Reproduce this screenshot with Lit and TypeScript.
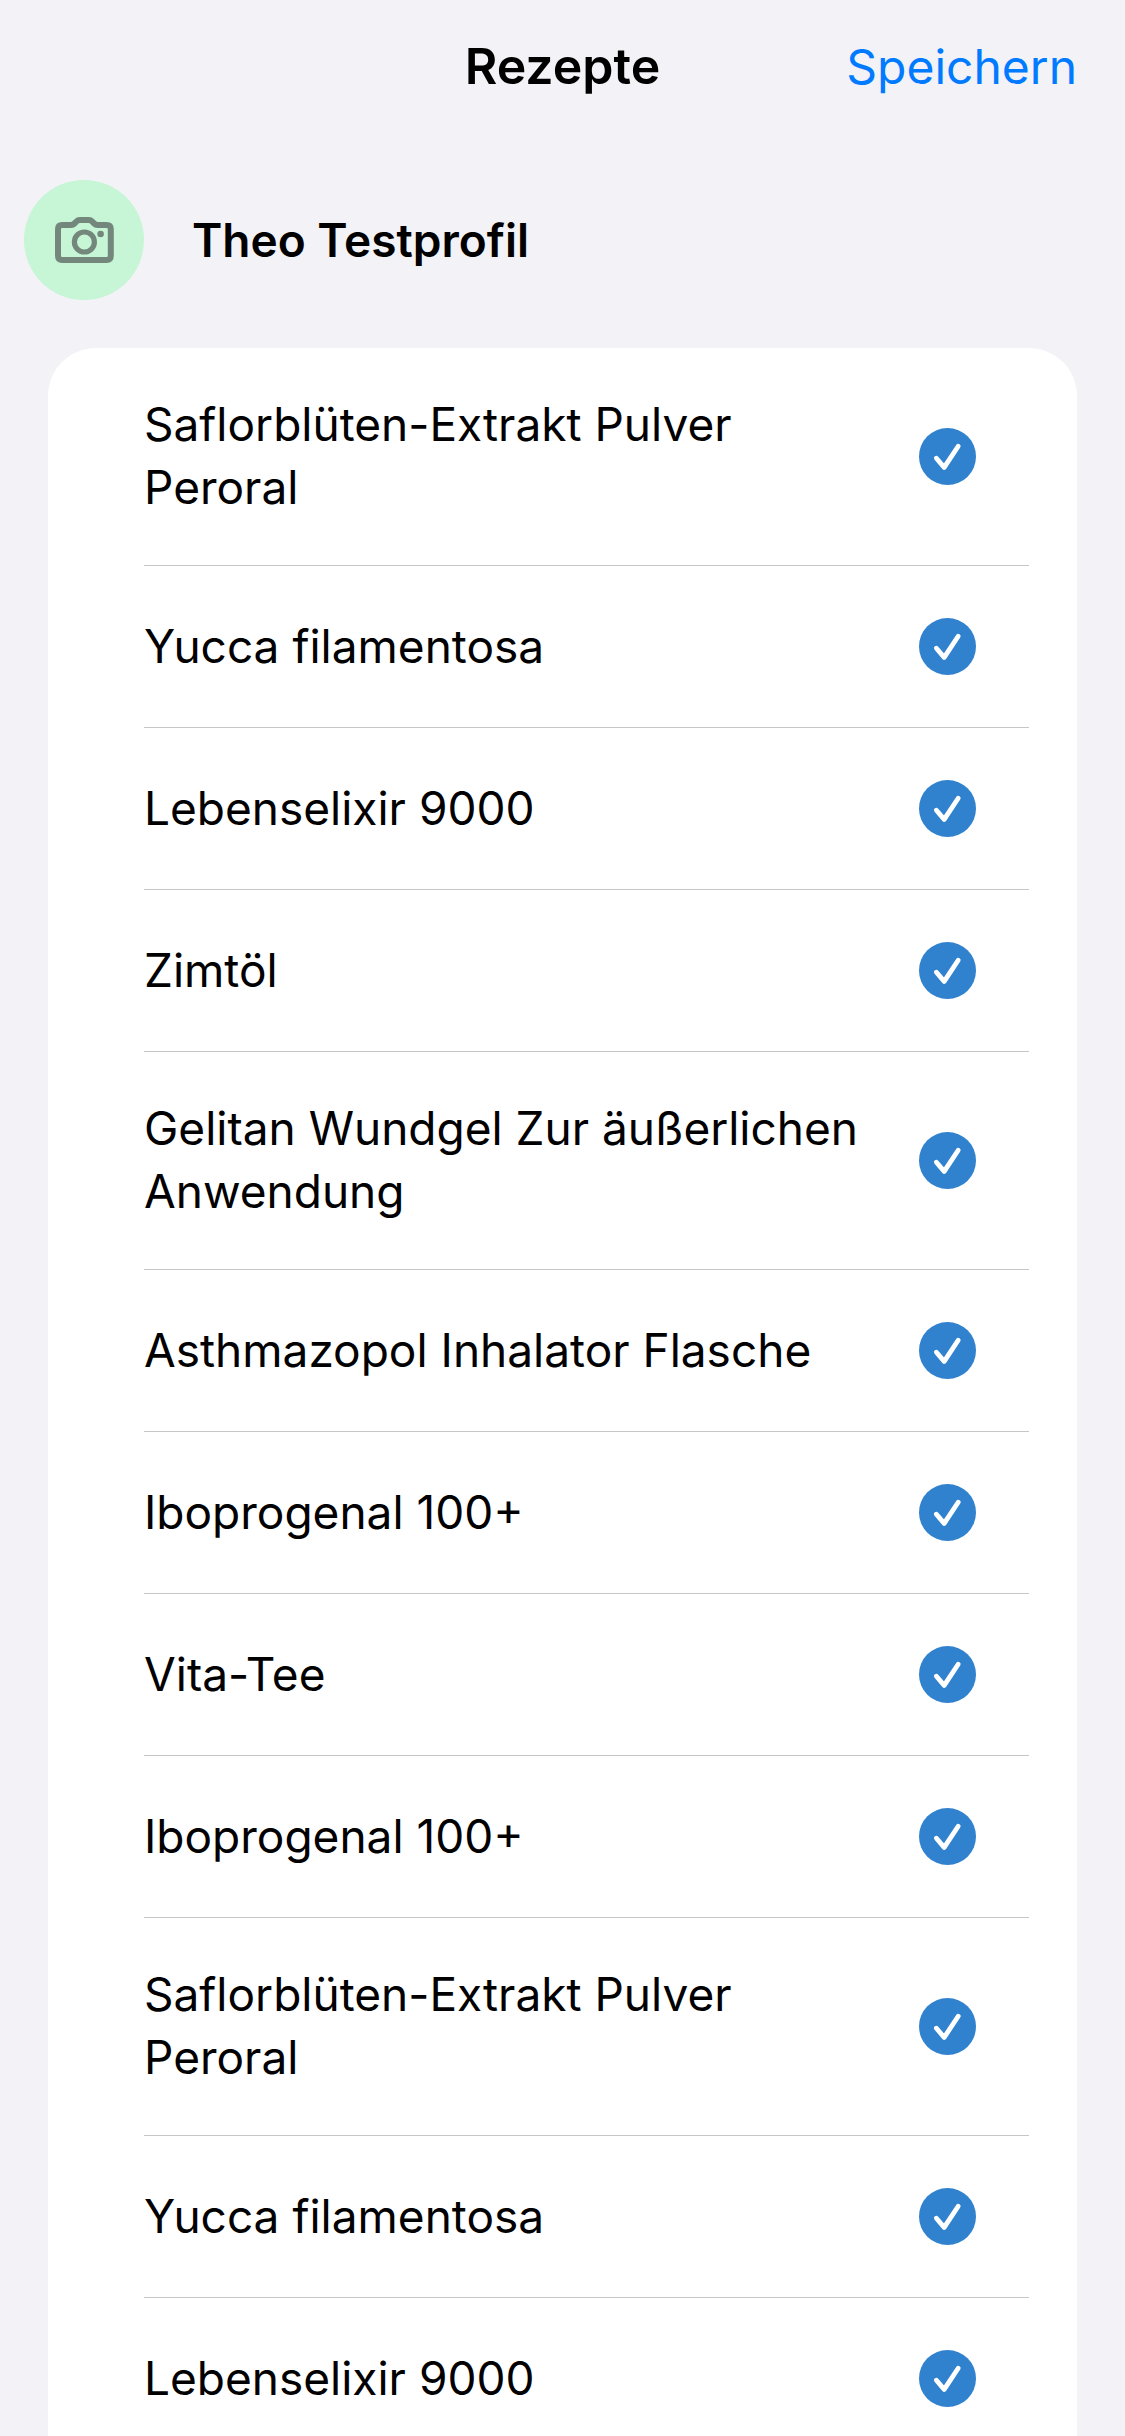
import { LitElement, html, css } from "lit";
import { customElement, property, state } from "lit/decorators.js";

interface Prescription {
  name: string;
  selected: boolean;
}

const NAMES = [
  "Saflorblüten-Extrakt Pulver Peroral",
  "Yucca filamentosa",
  "Lebenselixir 9000",
  "Zimtöl",
  "Gelitan Wundgel Zur äußerlichen Anwendung",
  "Asthmazopol Inhalator Flasche",
  "Iboprogenal 100+",
  "Vita-Tee",
  "Iboprogenal 100+",
  "Saflorblüten-Extrakt Pulver Peroral",
  "Yucca filamentosa",
  "Lebenselixir 9000",
];

@customElement("prescription-row")
export class PrescriptionRow extends LitElement {
  @property() name = "";
  @property({ type: Boolean }) selected = false;

  static styles = css`
    :host {
      display: block;
    }
    .row {
      display: flex;
      align-items: center;
      gap: 48px;
      min-height: 161px;
      padding: 45px 53px 46px 0;
      box-sizing: border-box;
      cursor: pointer;
    }
    .name {
      flex: 1;
      min-width: 0;
      font-size: 46px;
      line-height: 63px;
    }
    .check {
      display: grid;
      flex: none;
      width: 57px;
      height: 57px;
    }
    .box,
    .tick {
      grid-area: 1 / 1;
      width: 100%;
      height: 100%;
    }
    .box {
      appearance: none;
      margin: 0;
      box-sizing: border-box;
      border: 3px solid #c6c6c8;
      border-radius: 50%;
      cursor: pointer;
    }
    .box:checked {
      border: 0;
      background: #3182ce;
    }
    .tick {
      pointer-events: none;
      visibility: hidden;
    }
    .box:checked + .tick {
      visibility: visible;
    }
  `;

  render() {
    return html`
      <label class="row">
        <span class="name">${this.name}</span>
        <span class="check">
          <input class="box" type="checkbox" .checked=${this.selected} />
          <svg class="tick" viewBox="0 0 57 57" aria-hidden="true">
            <path d="M17.4 30.2 25.2 39.4 39.2 18.2" fill="none" stroke="#fff"
              stroke-width="4.8" stroke-linecap="round" stroke-linejoin="round" />
          </svg>
        </span>
      </label>
    `;
  }
}

@customElement("app-root")
export class AppRoot extends LitElement {
  @state() private items: Prescription[] = NAMES.map((name) => ({ name, selected: true }));

  static styles = css`
    :host {
      display: flex;
      flex-direction: column;
      height: 100vh;
      background: #f2f2f7;
      color: #000;
      font-family: Inter, "Liberation Sans", sans-serif;
    }
    .header {
      display: grid;
      grid-template-columns: 1fr auto 1fr;
      align-items: center;
      flex: none;
      height: 132px;
      padding: 0 48px;
    }
    .title {
      grid-column: 2;
      margin: 0;
      font-size: 50px;
      line-height: 63px;
      font-weight: 600;
    }
    .save {
      grid-column: 3;
      justify-self: end;
      padding: 0;
      border: 0;
      background: none;
      color: #007aff;
      font: inherit;
      font-size: 48px;
      line-height: 63px;
      cursor: pointer;
    }
    .content {
      flex: 1;
      min-height: 0;
      overflow-y: auto;
      scrollbar-width: none;
    }
    .profile {
      display: flex;
      align-items: center;
      gap: 48px;
      padding: 48px 24px;
    }
    .avatar {
      display: flex;
      align-items: center;
      justify-content: center;
      width: 120px;
      height: 120px;
      padding: 0;
      border: 0;
      border-radius: 50%;
      background: #c6f6d5;
      color: #74877c;
      cursor: pointer;
    }
    .camera {
      width: 59px;
      height: 46px;
    }
    .person {
      margin: 0;
      font-size: 46px;
      line-height: 63px;
      font-weight: 600;
    }
    .list {
      margin: 0 48px;
      padding: 0 48px 48px 96px;
      list-style: none;
      background: #fff;
      border-radius: 48px;
    }
    .item {
      border-bottom: 1px solid #c6c6c8;
    }
    .item:last-child {
      border-bottom-color: transparent;
    }
  `;

  render() {
    return html`
      <header class="header">
        <h1 class="title">Rezepte</h1>
        <button class="save" type="button">Speichern</button>
      </header>
      <main class="content">
        <section class="profile">
          <button class="avatar" type="button" aria-label="Profilbild">
            <svg class="camera" viewBox="0 0 59 46" fill="none" stroke="currentColor" aria-hidden="true">
              <path
                d="M7.2 8H15.8C17.4 8 18.5 7.6 19.6 6.4L21.4 4.5C22.4 3.4 23.4 3 24.8 3H33.8C35.2 3 36.2 3.4 37.2 4.5L39 6.4C40.1 7.6 41.2 8 42.8 8H51.6C54.3 8 55.8 9.5 55.8 12.2V38.8C55.8 41.5 54.3 43 51.6 43H7.2C4.5 43 3 41.5 3 38.8V12.2C3 9.5 4.5 8 7.2 8Z"
                stroke-width="6" stroke-linejoin="round" />
              <circle cx="29.4" cy="25" r="10" stroke-width="5.2" />
              <circle cx="45.6" cy="17" r="3.3" fill="currentColor" stroke="none" />
            </svg>
          </button>
          <h2 class="person">Theo Testprofil</h2>
        </section>
        <ul class="list">
          ${this.items.map(
            (item) => html`
              <li class="item">
                <prescription-row .name=${item.name} .selected=${item.selected}></prescription-row>
              </li>
            `
          )}
        </ul>
      </main>
    `;
  }
}
